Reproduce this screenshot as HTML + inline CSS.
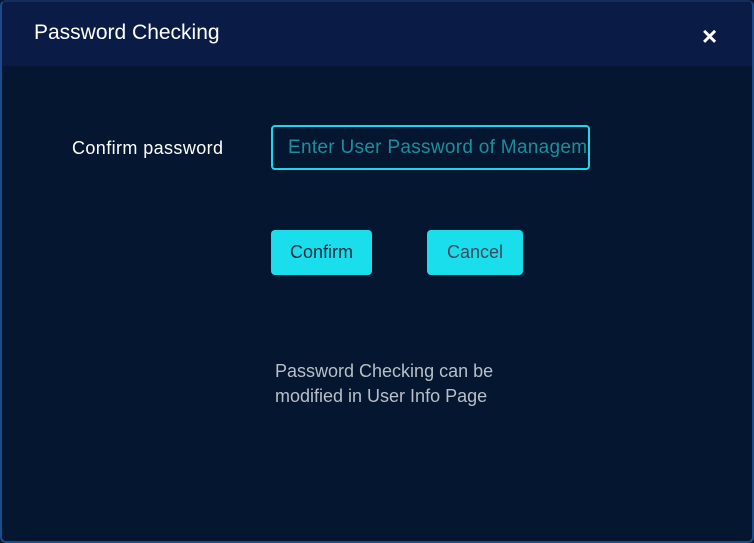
<!DOCTYPE html>
<html><head><meta charset="utf-8"><style>
html,body{margin:0;padding:0;width:754px;height:543px;background:#06152f;overflow:hidden;font-family:"Liberation Sans",sans-serif}
.dlg{position:absolute;left:0;top:0;width:750px;height:539px;border:2px solid #1b4b8a;border-top-color:#142d5a;border-radius:6px;background:#051631;overflow:hidden}
.hd{position:absolute;left:0;top:0;width:100%;height:64px;background:#0a1c46}
.title{position:absolute;left:32px;top:19px;color:#fff;font-size:21px}
.x{position:absolute;left:700px;top:22px;color:#fff;font-size:26px;font-weight:bold;line-height:24px}
.lbl{position:absolute;left:70px;top:136px;color:#fff;font-size:18px;letter-spacing:0.4px}
.inp{position:absolute;left:269px;top:123px;width:315px;height:41px;border:2px solid #1bd9ea;border-radius:4px;box-sizing:content-box;overflow:hidden;white-space:nowrap}
.inp span{position:absolute;left:15px;top:10px;color:#1a8f9c;font-size:19px;letter-spacing:0.3px}
.btn{position:absolute;top:228px;height:45px;background:#1bdeed;border-radius:4px;color:#1e2b3e;font-size:18px;text-align:center;line-height:45px}
.note{position:absolute;left:273px;top:357px;color:#b8bfc8;font-size:18px;line-height:25px}
</style></head><body>
<div class="dlg">
<div class="hd"><div class="title">Password Checking</div><div class="x">×</div></div>
<div class="lbl">Confirm password</div>
<div class="inp"><span>Enter User Password of Management</span></div>
<div class="btn" style="left:269px;width:101px">Confirm</div>
<div class="btn" style="left:425px;width:96px;color:#3a4a5c">Cancel</div>
<div class="note">Password Checking can be<br>modified in User Info Page</div>
</div>
</body></html>
